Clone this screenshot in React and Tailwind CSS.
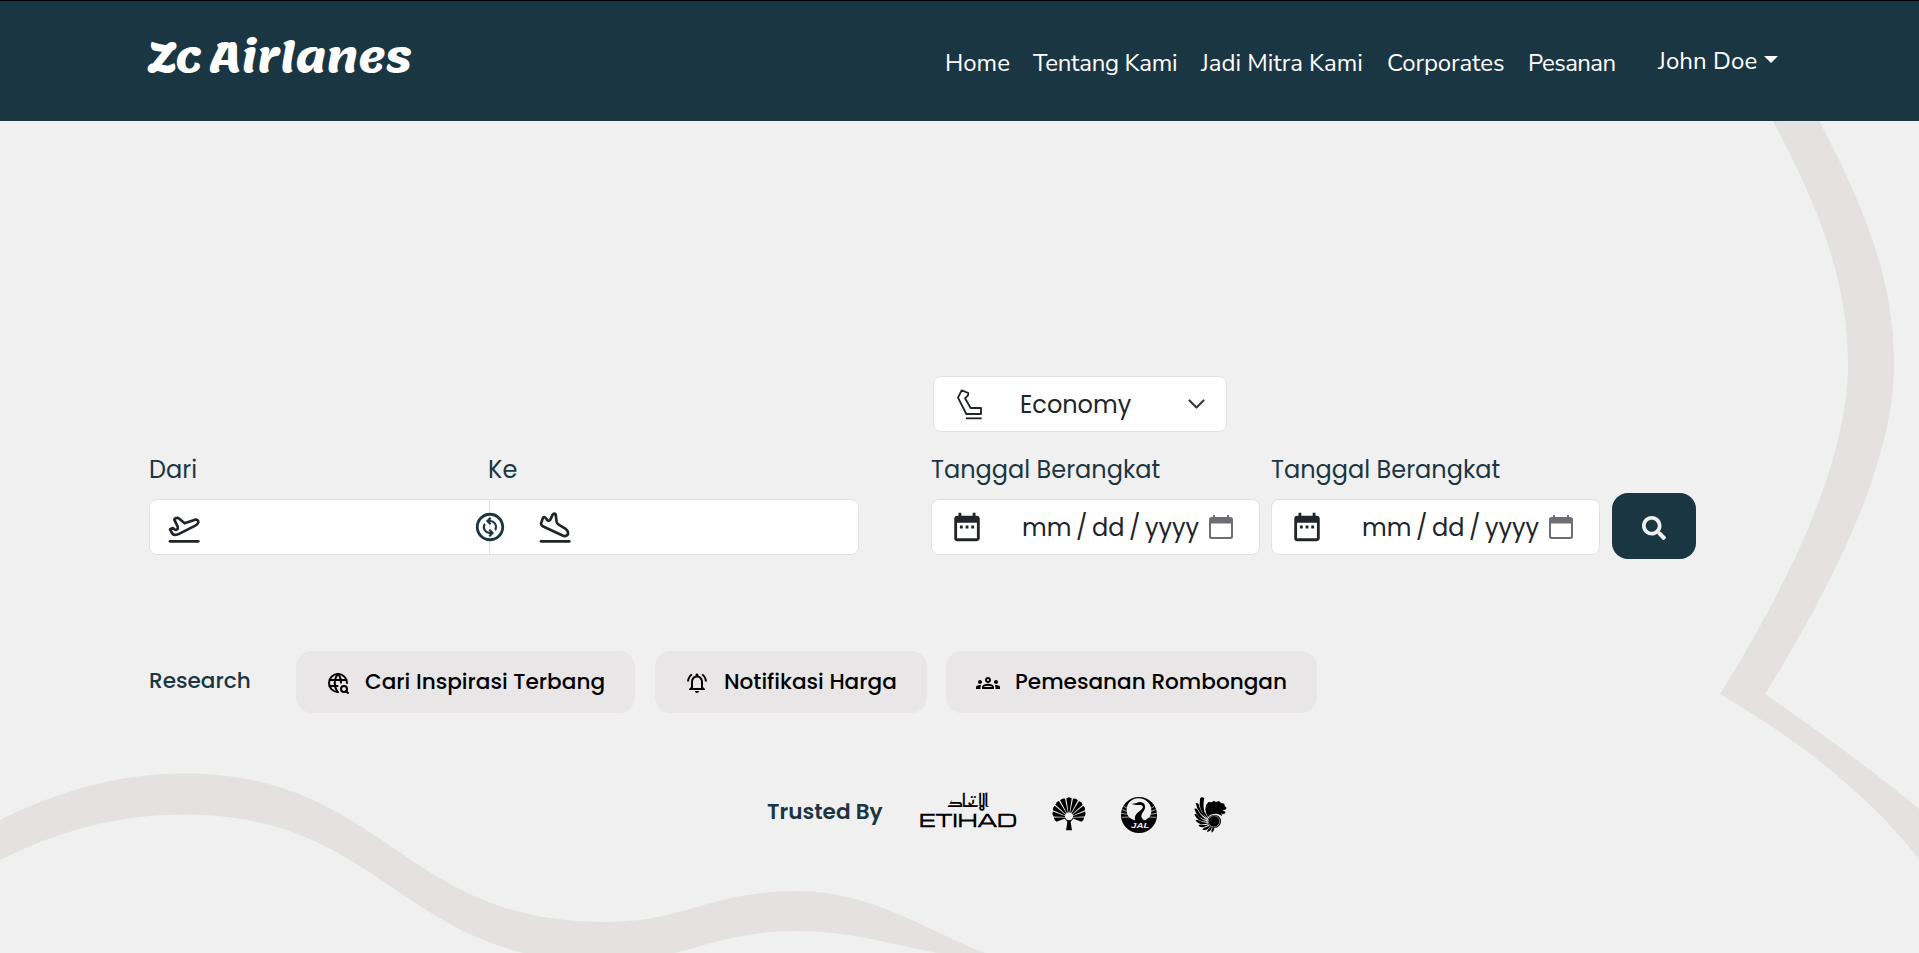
import {
  MdDateRange,
  MdOutlineChangeCircle,
  MdOutlineGroups,
  MdOutlineNotificationsActive,
} from 'react-icons/md';
import { TbWorldSearch } from 'react-icons/tb';
import { FaSearch } from 'react-icons/fa';

const poppins = "font-['Poppins','Inter',sans-serif]";
const field = 'h-14 rounded-lg border border-[#dee2e6] bg-white';

function Backdrop() {
  return (
    <svg
      className="pointer-events-none absolute inset-0 h-[953px] w-[1919px]"
      viewBox="0 0 1919 953"
      fill="#e5e1e0"
      aria-hidden="true"
    >
      <path d="M1773 121C1823 215 1848 285 1848 365C1848 455 1797 570 1720 694C1805 744 1870 797 1919 859V809C1870 768 1815 729 1765 694C1842 570 1894 455 1894 365C1894 285 1869 215 1819 121Z" />
      <path d="M0 820C62 789 122 773.5 184 773.5C385 773.5 401 922 604 922C685 922 710 891 797 891C872 891 925 930 985 953H938C890 944 850 931 797 931C710 931 685 962 604 962C401 962 385 814.5 184 814.5C122 814.5 62 829 0 860Z" />
    </svg>
  );
}

function NavBar() {
  return (
    <header className="relative flex h-[121px] items-start border-t border-black bg-[#1b3643] pl-[147px] text-white">
      <a className="mt-[27px] flex h-[60px] w-[798px] items-center font-['Lemonada','Inter',sans-serif] text-[42px] leading-[60px] font-bold whitespace-nowrap">
        <span className="w-[62px] tracking-[-2px]">Zc</span>
        <span className="tracking-[-0.3px]">Airlanes</span>
      </a>
      <nav className="mt-[44px] flex font-['Nunito_Sans','Open_Sans',sans-serif] text-2xl leading-9 whitespace-nowrap">
        <a className="w-[88px]">Home</a>
        <a className="w-[168px] tracking-[-0.3px]">Tentang Kami</a>
        <a className="w-[186px]">Jadi Mitra Kami</a>
        <a className="w-[141px] tracking-[-0.1px]">Corporates</a>
        <a className="w-[130px] tracking-[-0.6px]">Pesanan</a>
      </nav>
      <button className="mt-[42px] flex items-center font-['Nunito_Sans','Open_Sans',sans-serif] text-2xl leading-9 whitespace-nowrap">
        <span className="w-[106px] text-left tracking-[0.1px]">John Doe</span>
        <span className="mb-1 border-x-[7px] border-t-[7px] border-x-transparent border-t-white" />
      </button>
    </header>
  );
}

function TakeoffIcon() {
  return (
    <svg className="h-7 w-8" viewBox="116 226 96 84" fill="none" stroke="#212529" strokeWidth="8" strokeLinecap="round" strokeLinejoin="round">
      <path d="M122 266L131 262Q137 270 143 266Q147 263 145 258L135 237Q137 231 147 232L166 248L197 237Q208 236 207 245Q205 251 198 255L146 281Q135 285 130 280Z" />
      <path d="M122 302H207" />
    </svg>
  );
}

function LandingIcon() {
  return (
    <svg className="h-8 w-8" viewBox="1226 214 96 96" fill="none" stroke="#212529" strokeWidth="8" strokeLinecap="round" strokeLinejoin="round">
      <path d="M1232 249L1238 231Q1242 227 1246 232L1251 239Q1257 242 1260 237L1267 222Q1272 217 1276 221L1279 244Q1280 249 1285 252L1305 264Q1316 272 1312 282Q1306 289 1295 284L1242 259Q1233 255 1232 249Z" />
      <path d="M1232 302H1317" />
    </svg>
  );
}

function SeatIcon() {
  return (
    <svg className="h-[31px] w-[25px]" viewBox="0 0 75 93" fill="none" stroke="#212529" strokeWidth="5.500" strokeLinejoin="round">
      <path d="M14 4L34 12L33 19L24 28L41 57H72V75H28L3 26Z" />
      <path d="M27 88H74" />
    </svg>
  );
}

function PickerIcon() {
  return (
    <svg className="h-6 w-6" viewBox="0 0 24 24" fill="#6d6e73">
      <path fillRule="evenodd" d="M4 0H6V2H18V0H20V2H21.500Q24 2 24 4.500V21.500Q24 24 21.500 24H2.500Q0 24 0 21.500V4.500Q0 2 2.500 2H4ZM2 8.500V21Q2 22 3 22H21Q22 22 22 21V8.500Z" />
    </svg>
  );
}

function DateField() {
  return (
    <div>
      <label className="block text-2xl leading-9 text-[#1b3643]">Tanggal Berangkat</label>
      <div className={`mt-[11px] flex w-[329px] items-center pl-[18px] ${field}`}>
        <MdDateRange className="size-[34px] shrink-0 text-[#212529]" />
        <div className="mt-0.5 ml-[38px] flex text-2xl leading-8 whitespace-nowrap text-[#212529]">
          <span className="w-[54px]">mm</span>
          <span className="w-[16px]">/</span>
          <span className="w-[37px]">dd</span>
          <span className="w-[16px]">/</span>
          <span className="w-[64px]">yyyy</span>
        </div>
        <PickerIcon />
      </div>
    </div>
  );
}

const bladeAngles = [-120, -96, -72, -48, -24, 0, 24, 48, 72, 96, 120];

function bladePoint(deg, k) {
  const a = (deg * Math.PI) / 180;
  const x = 51 + 51 * Math.sin(a);
  const y = 47 - 46 * Math.cos(a);
  return `${51 + (x - 51) * k} ${62 + (y - 62) * k}`;
}

function FanLogo() {
  return (
    <svg className="h-[34px] w-[34px]" viewBox="0 0 102 104">
      {bladeAngles.map((a) => (
        <path
          key={a}
          d={`M${bladePoint(a - 8, 0.24)}L${bladePoint(a - 9.5, 0.97)}L${bladePoint(a, 1)}L${bladePoint(a + 9.5, 0.97)}L${bladePoint(a + 8, 0.24)}Z`}
        />
      ))}
      <path d="M37 66L51 58L65 66L56 76L60 102H42L46 76Z" />
      <ellipse cx="51" cy="62" rx="11" ry="9" fill="#f0f0f0" />
    </svg>
  );
}

function CraneLogo() {
  return (
    <svg className="h-9 w-9 overflow-visible" viewBox="0 0 108 108">
      <circle cx="54" cy="54" r="54" />
      <path fill="#f0f0f0" d="M52 4C30 5 16 20 17 42C18 58 28 67 43 70C38 57 47 49 57 41C65 35 68 30 64 26C59 23 52 25 46 24L31 21L47 18C54 13 67 14 71 23C76 36 66 43 62 52C59 60 63 66 70 70C84 65 91 55 91 41C91 20 76 5 52 4Z" />
      <path fill="none" stroke="#f0f0f0" strokeWidth="2" d="M8 28L19 34M4 38L18 43M1 49L20 52M3 61L27 60M100 28L89 34M104 38L90 43M107 49L88 52M105 61L81 60" />
      <text x="30" y="94" fill="#f0f0f0" textLength="55" lengthAdjust="spacingAndGlyphs" className="font-['Liberation_Sans',sans-serif] text-[20px] font-bold italic">JAL</text>
    </svg>
  );
}

function LionLogo() {
  return (
    <svg className="h-9 w-[33px]" viewBox="0 0 99 108">
      <path d="M18 5Q22 -2 31 3Q26 24 31 44L44 65Q20 50 17 24Z" />
      <path d="M5 18Q9 17 14 21Q18 46 42 66Q12 52 5 18Z" />
      <path d="M1 35Q6 33 11 38Q19 57 41 70Q8 64 1 35Z" />
      <path d="M1 52Q6 50 10 54Q20 68 41 74Q10 76 1 52Z" />
      <path d="M4 70Q9 66 14 70Q27 78 43 79Q17 88 4 70Z" />
      <path d="M13 86Q18 81 24 83Q35 86 46 82Q29 97 13 86Z" />
      <path d="M25 98Q29 91 36 91L50 85Q42 103 25 98Z" />
      <path d="M39 106Q40 98 46 94L54 87Q54 101 39 106ZM53 107Q51 101 54 96L60 87Q64 99 53 107Z" />
      <path d="M36 25L43 15L54 16L59 11L66 15L75 12L81 18L91 20L92 27L98 33L94 38L85 40L94 44L94 49L86 52L82 49L84 57L78 54Q69 48 57 51Q47 53 42 60Q34 48 34 37Z" />
      <circle cx="61" cy="73" r="20" />
      <circle cx="60" cy="73" r="17" fill="none" stroke="#f0f0f0" strokeWidth="1.500" />
    </svg>
  );
}

function EtihadLogo() {
  return (
    <svg className="h-[37px] w-[97px] overflow-visible" viewBox="0 0 97 37">
      <text x="27" y="15" textLength="42" lengthAdjust="spacingAndGlyphs" className="font-['Reem_Kufi','DejaVu_Sans',sans-serif] text-[18px]">الاتحاد</text>
      <text x="-1" y="35" textLength="98" lengthAdjust="spacingAndGlyphs" className="font-['Michroma','Inter',sans-serif] text-[17.500px] font-bold">ETIHAD</text>
    </svg>
  );
}

function ResearchButton({ icon: Icon, width, children }) {
  return (
    <button className={`flex h-[62px] items-center gap-[15px] rounded-2xl bg-[#e8e6e6] pl-[30px] text-[21.600px] font-medium whitespace-nowrap text-black ${width}`}>
      <Icon className="mt-0.5 size-6 shrink-0" />
      <span>{children}</span>
    </button>
  );
}

export default function App() {
  return (
    <div className="relative h-[953px] w-[1919px] overflow-hidden bg-[#f0f0f0]">
      <Backdrop />
      <NavBar />
      <main className={`relative pt-[255px] pl-[149px] ${poppins}`}>
        <div className={`ml-[784px] flex w-[294px] items-center pl-[23px] ${field}`}>
          <SeatIcon />
          <span className="mt-0.5 ml-[38px] w-[168px] shrink-0 text-2xl text-[#212529]">Economy</span>
          <svg className="h-[10px] w-[17px]" viewBox="0 0 17 10" fill="none" stroke="#343a40" strokeWidth="2.200" strokeLinecap="round" strokeLinejoin="round">
            <path d="M1.500 1.500L8.500 8.500L15.500 1.500" />
          </svg>
        </div>

        <div className="mt-5 flex items-start">
          <div className="w-[782px]">
            <div className="flex text-2xl leading-9 text-[#1b3643]">
              <label className="w-[339px]">Dari</label>
              <label>Ke</label>
            </div>
            <div className={`relative mt-[11px] flex w-[710px] ${field}`}>
              <div className="flex w-[340px] items-center border-r border-[#dee2e6] pt-1.5 pl-[18px]">
                <TakeoffIcon />
              </div>
              <div className="flex items-center pt-px pl-[49px]">
                <LandingIcon />
              </div>
              <MdOutlineChangeCircle className="absolute top-[10px] left-[323px] size-[34px] text-[#1b3643]" />
            </div>
          </div>
          <div className="flex gap-[11px]">
            <DateField />
            <DateField />
          </div>
          <button className="mt-[41px] ml-3 flex h-[66px] w-[84px] items-center justify-center rounded-2xl bg-[#1b3643] pt-1 text-[#f0f0f0]">
            <FaSearch className="size-6" />
          </button>
        </div>

        <div className="mt-[92px] flex items-center">
          <span className="-mt-0.5 w-[147px] text-[21.600px] font-medium text-[#1b3643]">Research</span>
          <div className="flex">
            <ResearchButton icon={TbWorldSearch} width="w-[339px] mr-5">Cari Inspirasi Terbang</ResearchButton>
            <ResearchButton icon={MdOutlineNotificationsActive} width="w-[272px] mr-[19px]">Notifikasi Harga</ResearchButton>
            <ResearchButton icon={MdOutlineGroups} width="w-[371px]">Pemesanan Rombongan</ResearchButton>
          </div>
        </div>

        <div className="mt-[79px] ml-[618px] flex items-start">
          <span className="mt-[3px] w-[153px] text-[21.600px] leading-[33px] font-semibold text-[#1b3643]">Trusted By</span>
          <EtihadLogo />
          <div className="mt-[5px] flex items-start">
            <div className="ml-[35px]"><FanLogo /></div>
            <div className="ml-[35px]"><CraneLogo /></div>
            <div className="ml-[37px]"><LionLogo /></div>
          </div>
        </div>
      </main>
    </div>
  );
}
